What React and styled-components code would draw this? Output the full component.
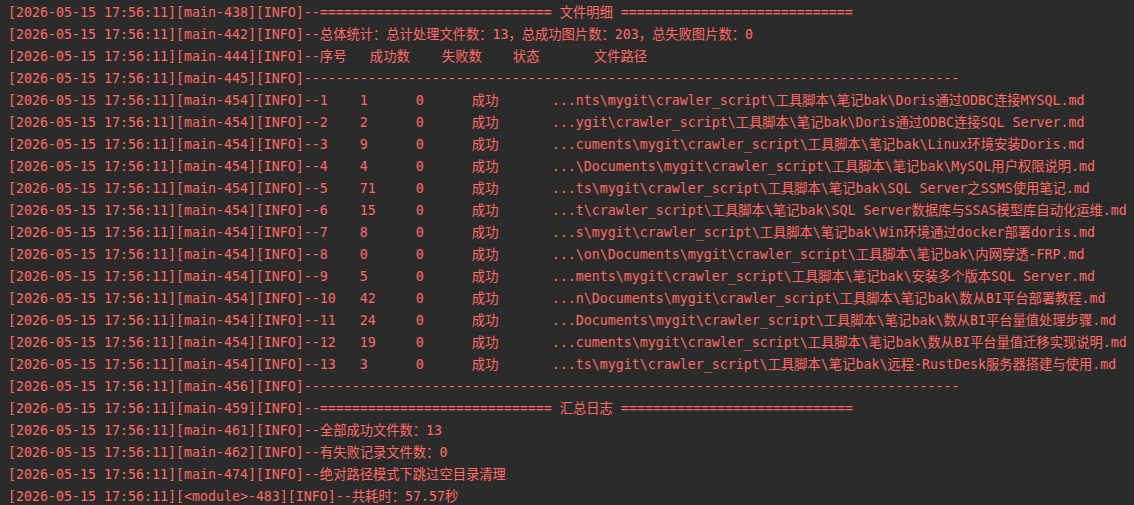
import React from "react";
import styled, { createGlobalStyle } from "styled-components";

const GlobalStyle = createGlobalStyle`
  html, body {
    margin: 0;
    padding: 0;
    background: #2b2b2b;
  }
  body {
    width: 1134px;
    height: 505px;
    overflow: hidden;
  }
`;

const Console = styled.div`
  box-sizing: border-box;
  width: 1134px;
  height: 505px;
  padding: 2px 0 0 8px;
  background: #2b2b2b;
  color: #ff6b68;
  font-family: "DejaVu Sans Mono", "Noto Sans CJK SC", monospace;
  font-size: 13.29px;
  overflow: hidden;
`;

const LogLine = styled.div`
  height: 22px;
  line-height: 22px;
  white-space: pre;
  display: flex;
  align-items: baseline;
`;

const Prefix = styled.span`
  white-space: pre;
`;

const Cell = styled.span`
  display: inline-block;
  white-space: pre;
  width: ${(p) => p.$w}px;
  flex: none;
`;

const Msg = styled.span`
  white-space: pre;
`;

const TS = "[2026-05-15 17:56:11]";
const prefix = (tag) => `${TS}[${tag}][INFO]--`;

const EQ = "=".repeat(29);
const DASH = "-".repeat(80);

const rows = [
  [1, 1, "...nts\\mygit\\crawler_script\\工具脚本\\笔记bak\\Doris通过ODBC连接MYSQL.md"],
  [2, 2, "...ygit\\crawler_script\\工具脚本\\笔记bak\\Doris通过ODBC连接SQL Server.md"],
  [3, 9, "...cuments\\mygit\\crawler_script\\工具脚本\\笔记bak\\Linux环境安装Doris.md"],
  [4, 4, "...\\Documents\\mygit\\crawler_script\\工具脚本\\笔记bak\\MySQL用户权限说明.md"],
  [5, 71, "...ts\\mygit\\crawler_script\\工具脚本\\笔记bak\\SQL Server之SSMS使用笔记.md"],
  [6, 15, "...t\\crawler_script\\工具脚本\\笔记bak\\SQL Server数据库与SSAS模型库自动化运维.md"],
  [7, 8, "...s\\mygit\\crawler_script\\工具脚本\\笔记bak\\Win环境通过docker部署doris.md"],
  [8, 0, "...\\on\\Documents\\mygit\\crawler_script\\工具脚本\\笔记bak\\内网穿透-FRP.md"],
  [9, 5, "...ments\\mygit\\crawler_script\\工具脚本\\笔记bak\\安装多个版本SQL Server.md"],
  [10, 42, "...n\\Documents\\mygit\\crawler_script\\工具脚本\\笔记bak\\数从BI平台部署教程.md"],
  [11, 24, "...Documents\\mygit\\crawler_script\\工具脚本\\笔记bak\\数从BI平台量值处理步骤.md"],
  [12, 19, "...cuments\\mygit\\crawler_script\\工具脚本\\笔记bak\\数从BI平台量值迁移实现说明.md"],
  [13, 3, "...ts\\mygit\\crawler_script\\工具脚本\\笔记bak\\远程-RustDesk服务器搭建与使用.md"],
];

function Line({ tag, children }) {
  return (
    <LogLine>
      <Prefix>{prefix(tag)}</Prefix>
      {children}
    </LogLine>
  );
}

export default function App() {
  return (
    <>
      <GlobalStyle />
      <Console>
        <Line tag="main-438">
          <Msg>{`${EQ} 文件明细 ${EQ}`}</Msg>
        </Line>
        <Line tag="main-442">
          <Msg>总体统计：总计处理文件数：13，总成功图片数：203，总失败图片数：0</Msg>
        </Line>
        <Line tag="main-444">
          <Cell $w={50}>序号</Cell>
          <Cell $w={72}>成功数</Cell>
          <Cell $w={71}>失败数</Cell>
          <Cell $w={81}>状态</Cell>
          <Msg>文件路径</Msg>
        </Line>
        <Line tag="main-445">
          <Msg>{DASH}</Msg>
        </Line>
        {rows.map(([idx, ok, path]) => (
          <Line key={idx} tag="main-454">
            <Cell $w={40}>{idx}</Cell>
            <Cell $w={56}>{ok}</Cell>
            <Cell $w={56}>0</Cell>
            <Cell $w={80}>成功</Cell>
            <Msg>{path}</Msg>
          </Line>
        ))}
        <Line tag="main-456">
          <Msg>{DASH}</Msg>
        </Line>
        <Line tag="main-459">
          <Msg>{`${EQ} 汇总日志 ${EQ}`}</Msg>
        </Line>
        <Line tag="main-461">
          <Msg>全部成功文件数：13</Msg>
        </Line>
        <Line tag="main-462">
          <Msg>有失败记录文件数：0</Msg>
        </Line>
        <Line tag="main-474">
          <Msg>绝对路径模式下跳过空目录清理</Msg>
        </Line>
        <Line tag="<module>-483">
          <Msg>共耗时：57.57秒</Msg>
        </Line>
      </Console>
    </>
  );
}
